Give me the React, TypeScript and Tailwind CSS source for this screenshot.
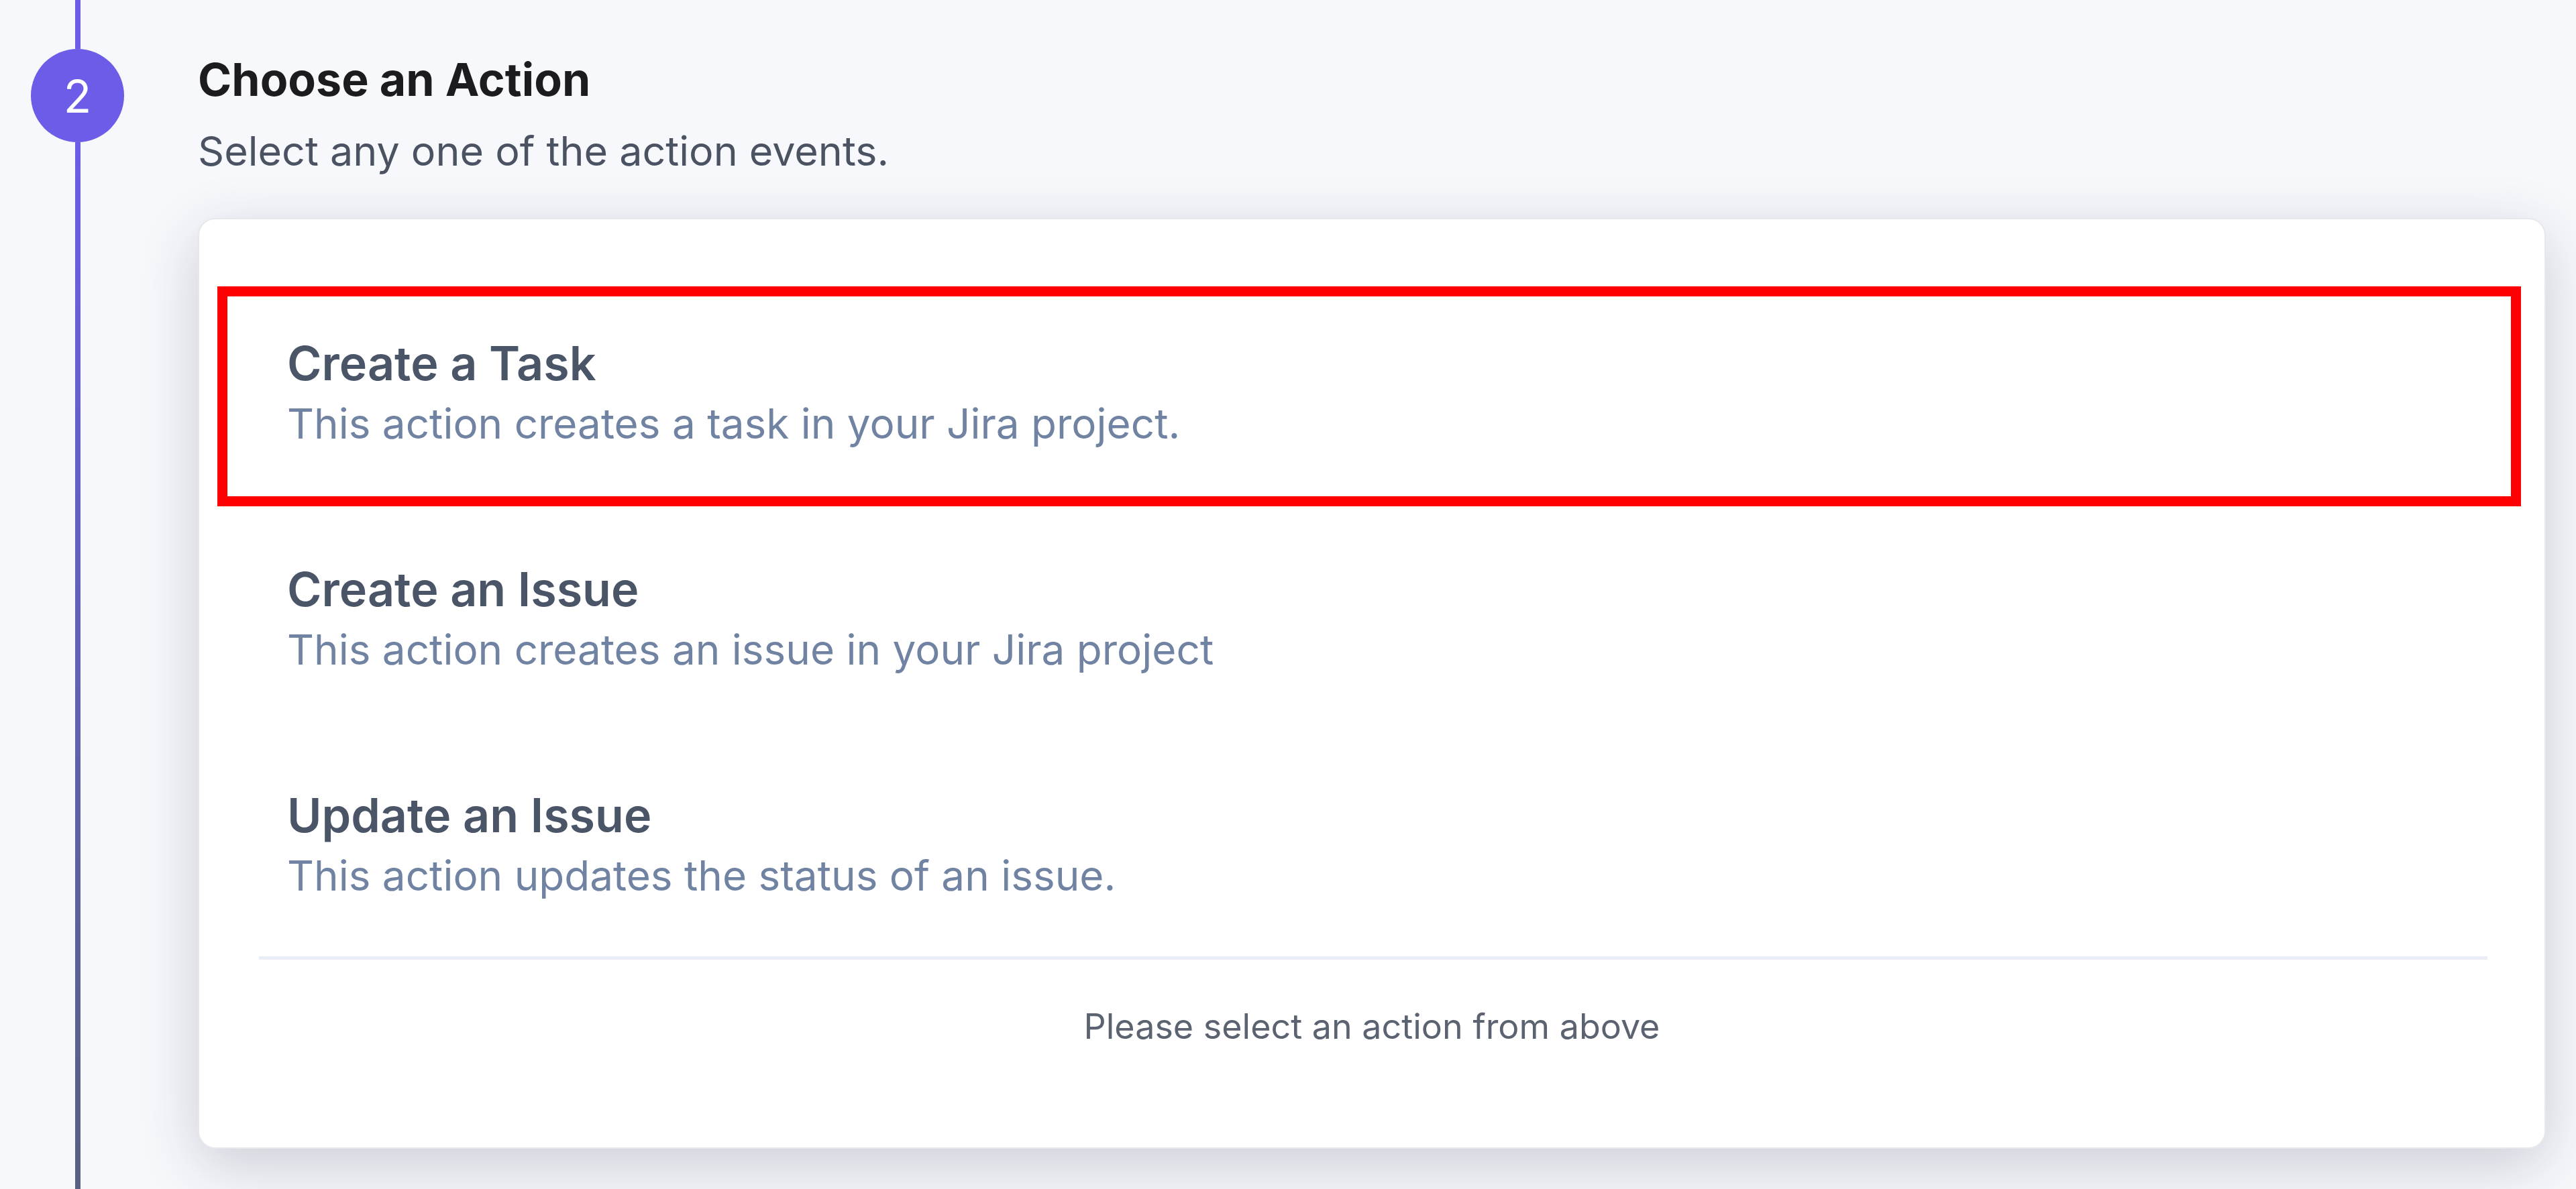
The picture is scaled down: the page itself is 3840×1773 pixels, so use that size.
import React from 'react'

type ActionEvent = {
    title: string
    description: string
}

const actions: ActionEvent[] = [
    { title: 'Create a Task', description: 'This action creates a task in your Jira project.' },
    { title: 'Create an Issue', description: 'This action creates an issue in your Jira project' },
    { title: 'Update an Issue', description: 'This action updates the status of an issue.' },
]

const App: React.FC = () => {
    // first row is the one marked in red
    const highlighted = 0

    return (
        <div className="flex min-h-screen bg-[#f7f8fc] font-['Inter',sans-serif]">
            {/* step rail */}
            <div className="flex w-[231px] shrink-0 flex-col items-center">
                <div className="h-[73px] w-[8px] bg-[#6c5ce7]" />
                <div className="flex h-[139px] w-[139px] shrink-0 items-center justify-center rounded-full bg-[#6c5ce7] text-[68px] leading-none text-white">
                    2
                </div>
                <div className="w-[8px] flex-1 bg-gradient-to-b from-[#6c5ce7] to-[#58617f]" />
            </div>

            <div className="flex-1 pt-[78px] pr-[45px] pb-[60px] pl-[64px]">
                <h2 className="text-[68px] leading-[80px] font-bold text-[#1c1c1e]">Choose an Action</h2>
                <p className="mt-[27px] text-[61px] leading-[80px] text-[#4b5363]">
                    Select any one of the action events.
                </p>

                <div className="mt-[60px] rounded-[26px] border-2 border-[#e7e8ec] bg-white shadow-[0_24px_90px_rgba(30,35,60,0.2)]">
                    <div className="flex flex-col gap-[39px] pt-[115px] pr-[50px] pl-[42px]">
                        {actions.map((action, i) => (
                            <div
                                key={action.title}
                                className={
                                    'h-[298px] cursor-pointer pt-[56px] pl-[89px] ' +
                                    (i === highlighted ? 'outline-[15px] outline-[#ff0000] outline-solid' : '')
                                }
                            >
                                <div className="text-[70px] leading-[88px] font-semibold text-[#4a5568]">{action.title}</div>
                                <div className="text-[62px] leading-[92px] text-[#7183a2]">{action.description}</div>
                            </div>
                        ))}
                    </div>

                    <div className="mt-[12px] mr-[85px] ml-[89px] h-[5px] bg-[#e9edf7]" />

                    <p className="mt-[68px] pb-[148px] text-center text-[52px] leading-[64px] text-[#5b6270]">
                        Please select an action from above
                    </p>
                </div>
            </div>
        </div>
    )
}

export default App
